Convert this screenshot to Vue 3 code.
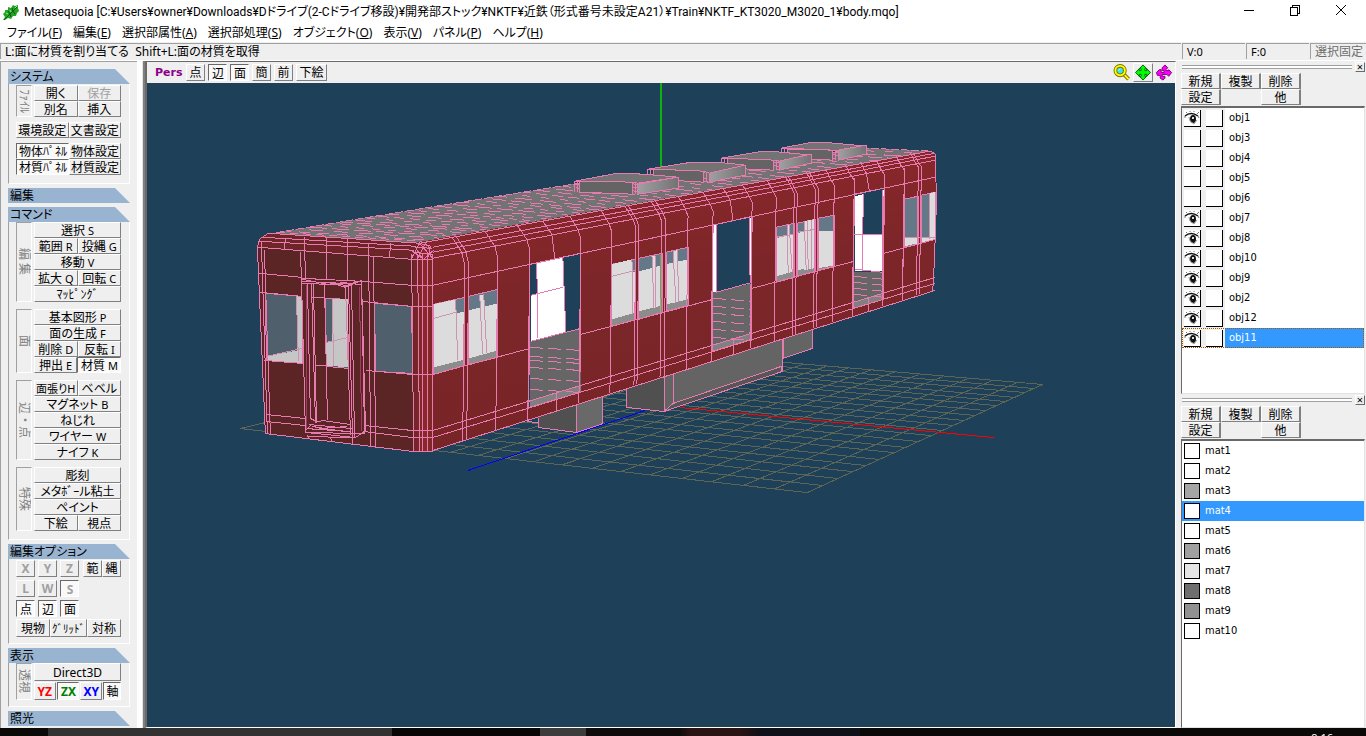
<template>
  <div class="app">
    <header class="titlebar">
      <svg class="leaf" viewBox="0 0 17 17">
        <path d="M1 16L3 13L1 10L3 8L3 6L6 6L6 3L9 4L11 1L13 2L16 1L16 4L17 7L15 9L14 12L11 12L9 15L6 14L3 16Z" fill="#22a522" />
        <path d="M2 16L15 3M6 7L8 10M10 4L11 7M9 13L8 10M13 10L11 7" stroke="#0a5a12" fill="none" />
        <path d="M4 9L6 10M8 6L9 8M13 4L15 2" stroke="#8cf08c" fill="none" />
      </svg>
      <h1>Metasequoia [C:¥Users¥owner¥Downloads¥Dドライブ(2-Cドライブ移設)¥開発部ストック¥NKTF¥近鉄（形式番号未設定A21）¥Train¥NKTF_KT3020_M3020_1¥body.mqo]</h1>
      <div class="window-buttons">
        <button aria-label="最小化"><svg viewBox="0 0 12 12"><path d="M1 6.5H11" /></svg></button>
        <button aria-label="元に戻す"><svg viewBox="0 0 12 12"><path d="M1.5 3.5H8.500V11.500H1.500ZM3.500 3V1.500H10.500V9.500H9" /></svg></button>
        <button aria-label="閉じる"><svg viewBox="0 0 12 12"><path class="smooth" d="M1 1L11 11M11 1L1 11" /></svg></button>
      </div>
    </header>

    <nav class="menubar">
      <button v-for="m in menus" :key="m.key">{{ m.label }}(<u>{{ m.key }}</u>)</button>
    </nav>

    <div class="statusbar">
      <span class="hint">L:面に材質を割り当てる&nbsp; Shift+L:面の材質を取得</span>
      <span class="cell">V:0</span>
      <span class="cell">F:0</span>
      <span class="cell lock">選択固定</span>
    </div>

    <main class="workspace">
      <aside class="sidebar">
        <section v-for="s in sections" :key="s.title" class="section">
          <h2>{{ s.title }}</h2>
          <div v-if="s.groups" class="section-body" :class="s.kind">
            <div v-for="(g, gi) in s.groups" :key="gi" class="group" :class="g.kind">
              <span v-if="g.tab" class="tab">{{ g.tab }}</span>
              <div class="rows">
                <div v-for="(row, ri) in g.rows" :key="ri" class="row">
                  <button
                    v-for="b in row"
                    :key="b.t + (b.k || '')"
                    class="btn"
                    :class="[b.c, { pressed: b.on }]"
                    :disabled="b.off"
                  >{{ b.t }}<span v-if="b.k" class="key">{{ b.k }}</span></button>
                </div>
              </div>
            </div>
          </div>
        </section>
      </aside>
      <div class="sidebar-edge"></div>

      <section class="view">
        <div class="view-toolbar">
          <strong>Pers</strong>
          <button v-for="b in viewButtons" :key="b.t" class="btn" :class="{ pressed: b.on, wide: b.t.length > 1 }">{{ b.t }}</button>
          <div class="nav-icons">
            <button aria-label="拡大">
              <svg viewBox="0 0 18 18">
                <path d="M10 10L16 16" stroke="#807000" stroke-width="4" />
                <path d="M10 10L16 16" stroke="#ffff00" stroke-width="2" />
                <circle cx="7" cy="7" r="5" fill="#30e8f8" stroke="#807000" stroke-width="4" />
                <circle cx="7" cy="7" r="5" fill="none" stroke="#ffff00" stroke-width="2" />
                <path d="M5 7L7 5" stroke="#fff" />
              </svg>
            </button>
            <button class="raised" aria-label="移動">
              <svg viewBox="0 0 18 18">
                <path d="M9 1L13 5H11V7H13V5L17 9L13 13V11H11V13H13L9 17L5 13H7V11H5V13L1 9L5 5V7H7V5H5Z" fill="#00ff00" stroke="#006000" />
              </svg>
            </button>
            <button aria-label="回転">
              <svg viewBox="0 0 18 18">
                <path d="M10 1L13 4L11 6V7H14V6L17 9L14 13L12 11H7V13L10 13V15L8 17L5 15V12L2 12L1 9L4 6H6V9H9V7H7V4Z" fill="#ff00ff" stroke="#700070" />
              </svg>
            </button>
          </div>
        </div>

        <svg class="scene" viewBox="147 83 1028 643" preserveAspectRatio="xMidYMid slice" shape-rendering="crispEdges">
          <defs>
            <linearGradient id="sideFill" x1="0" y1="0" x2="0.200" y2="1">
              <stop offset="0" stop-color="#8f272b" />
              <stop offset="0.500" stop-color="#7c2629" />
              <stop offset="1" stop-color="#782528" />
            </linearGradient>
            <linearGradient id="cornerFill">
              <stop offset="0" stop-color="#6a2527" />
              <stop offset="0.600" stop-color="#8a2729" />
              <stop offset="1" stop-color="#7c2629" />
            </linearGradient>
            <linearGradient id="boxFill">
              <stop offset="0" stop-color="#a0a0a0" />
              <stop offset="1" stop-color="#737373" />
            </linearGradient>
          </defs>

          <path :d="gridPath" class="grid" />
          <path d="M661 83V175" stroke="#0ab40a" />

          <!-- 床下機器 -->
          <g class="edge">
            <path d="M538 415L577 400V432L539 427Z" fill="#505050" />
            <path d="M577 400L603 391V423L577 432Z" fill="#696969" />
            <path d="M527 421L538 422" fill="none" />
            <path d="M783 336L812 326V348L783 358Z" fill="#646464" />
            <path d="M627 385L664 372V411L627 407Z" fill="#505050" />
            <path d="M664 373L782 334V371L664 411Z" fill="#646464" />
            <path d="M664 411L673 403L781 366L782 371Z" fill="#565656" />
            <path d="M673 370V403" fill="none" />
          </g>
          <path d="M645 410L468 470" stroke="#0000ff" />
          <path d="M680 407L993 437" stroke="#ff0000" />

          <!-- 屋根 -->
          <path d="M267 234L412 210L573 184L867 148L930 151L413 243Z" fill="#737373" />
          <path d="M267 234L412 210L573 184L867 148L930 151" class="line dash" />
          <path
            v-for="(r, i) in roofLines"
            :key="'r' + i"
            :d="r"
            class="line"
            :stroke-dasharray="(8 + (i % 4) * 3) + ' ' + (5 + (i % 3) * 3)"
            :stroke-dashoffset="i * 7"
          />

          <!-- クーラー -->
          <g v-for="(u, i) in coolers" :key="'c' + i">
            <path :d="u.top" fill="#737373" class="line-only" />
            <path :d="u.front" fill="#646464" class="line-only" />
            <path :d="u.side" fill="url(#boxFill)" class="line-only" />
            <path :d="u.fins" class="line" />
          </g>

          <!-- 側面 -->
          <path d="M413 243L930 151L936 158V202L932 291L432 450L414 451Z" fill="url(#sideFill)" />
          <path d="M412 246L420 243L434 248L433 450L414 451Z" fill="url(#cornerFill)" />

          <!-- 側面の窓 -->
          <g v-for="(w, i) in panes" :key="'w' + i">
            <path :d="w.outer" fill="#8c8c8c" />
            <path :d="w.slate" fill="#647887" />
            <path :d="w.white" fill="#dcdcdc" />
            <path :d="w.outer" class="line" />
          </g>
          <path d="M434 304L456 299V360L434 366ZM612 264L632 259V313L612 319ZM804 221L814 219V268L804 270ZM929 193L935 192V238L929 240ZM480 295L484 294V354L480 355ZM652 256L655 255V307L652 308ZM673 251L677 250V302L673 303ZM787 225L789 225V272L787 273Z" fill="#dcdcdc" />
          <path d="M434 318L456 312M456 299L458 360M480 295L483 354M484 294L487 353M612 276L636 270M632 259L633 314M652 256L654 308M655 255L656 308M673 251L676 303M677 250L679 302M787 225L788 273M789 225L792 272M804 221L806 270M807 221L808 269M811 220V269M776 237L794 234M797 232L815 229M929 193V239M904 237L935 237" class="inner" />
          <path d="M661 255V312" stroke="#4fb04f" />

          <!-- ドア開口 -->
          <g v-for="(d, i) in doors" :key="'d' + i">
            <path :d="d.outer" fill="#1e4159" />
            <path :d="d.floor" fill="#666" />
            <path :d="d.strip" fill="#808080" />
            <path :d="d.white" fill="#fff" />
            <path :d="d.dashes" class="line" stroke-dasharray="13 5" />
            <path :d="d.trim" class="line" />
            <path :d="d.outer" class="line" />
          </g>

          <path :d="sideLevels" class="line" />
          <path :d="sideVerticals" class="line" />
          <path :d="roofCurves" class="line" />
          <path d="M930 151L935 154L936 202L935 233L933 282L932 291M904 168V200L902 298M854 178V196" class="line" />

          <!-- 前面 -->
          <path d="M258 243L262 236L270 233L420 243L413 250L414 451L266 433Z" fill="#5c2525" />
          <path d="M259 241L263 236L270 233L420 243L413 258L259 247Z" fill="#6e2528" />
          <g class="edge">
            <path d="M266 293L302 296L303 363L267 360Z" fill="#4f606c" />
            <path d="M375 303L412 306L413 373L376 371Z" fill="#4f606c" />
            <path d="M326 298L348 299L349 368L327 366Z" fill="#4f606c" />
          </g>
          <path d="M297 296H302L303 363L268 360V356L298 350ZM333 299H348L349 367L327 365V342L333 340Z" fill="#c6c6c6" />
          <path d="M297 296L299 361M267 356L303 348M333 299L334 366M327 342L349 337" class="inner" />
          <path :d="frontLines" class="line" />

          <!-- 貫通扉 -->
          <path d="M302 278L362 281L365 433L306 432ZM303 281L362 284M302 283L351 285L362 280M308 283L311 418M312 283L316 422L323 420L351 424M314 284L317 421M325 284L328 419M349 284L353 437M352 285L355 436M362 281L366 430L356 437L307 432M346 286L351 434M313 297H326M316 365H327M306 428L351 431M310 424L352 428M313 426L345 431M308 436L353 437M311 418L317 421M307 429L312 424M320 428L347 426M303 279L328 284L347 282M336 284L346 287L356 281" class="line" />
          <path d="M307 285V428M360 287L362 430" stroke="#a13c62" />

          <!-- 角の丸み -->
          <path :d="cornerLines" class="line" />
        </svg>
      </section>

      <aside class="panels">
        <section class="panel objects">
          <div class="grip"><span></span><button aria-label="閉じる">×</button></div>
          <div class="panel-buttons">
            <button v-for="b in panelButtons" :key="b" class="btn" :class="{ last: b === '他' }">{{ b }}</button>
          </div>
          <ul class="list">
            <li v-for="o in objects" :key="o.name" :class="{ selected: o.name === 'obj11' }">
              <span class="checks">
                <button class="box" :aria-pressed="o.visible" :aria-label="o.name + ' 表示'">
                  <svg v-if="o.visible" viewBox="0 0 16 16">
                    <path d="M1 6Q7 1 14 6" stroke="#111" stroke-width="1.500" fill="none" />
                    <path d="M3 3L2 2M6 2V1M10 2V1M13 4L15 2M1 6V8M14 6L15 8" stroke="#777" fill="none" />
                    <ellipse cx="9" cy="9" rx="3" ry="4" fill="#111" />
                    <path d="M5 7L6 11L10 14L13 10" stroke="#999" fill="none" />
                    <path d="M8 7H10V9H8Z" fill="#ddd" />
                  </svg>
                </button>
                <button class="box" :aria-label="o.name + ' ロック'"></button>
              </span>
              <span class="name">{{ o.name }}</span>
            </li>
          </ul>
        </section>

        <section class="panel materials">
          <div class="grip"><span></span><button aria-label="閉じる">×</button></div>
          <div class="panel-buttons">
            <button v-for="b in panelButtons" :key="b" class="btn" :class="{ last: b === '他' }">{{ b }}</button>
          </div>
          <ul class="list">
            <li v-for="(m, i) in materials" :key="i" :class="{ selected: i === 3 }">
              <span class="swatch" :style="{ background: m }"></span>
              <span class="name">mat{{ i + 1 }}</span>
            </li>
          </ul>
        </section>
      </aside>
    </main>

    <footer class="taskbar"><span>9:16</span></footer>
  </div>
</template>

<script setup>
const menus = [
  { label: 'ファイル', key: 'F' },
  { label: '編集', key: 'E' },
  { label: '選択部属性', key: 'A' },
  { label: '選択部処理', key: 'S' },
  { label: 'オブジェクト', key: 'O' },
  { label: '表示', key: 'V' },
  { label: 'パネル', key: 'P' },
  { label: 'ヘルプ', key: 'H' }
]

const viewButtons = [
  { t: '点' }, { t: '辺', on: true }, { t: '面', on: true }, { t: '簡' }, { t: '前' }, { t: '下絵' }
]

const panelButtons = ['新規', '複製', '削除', '設定', '他']

const sections = [
  {
    title: 'システム',
    kind: 'system',
    groups: [
      { tab: 'ﾌｧｲﾙ', rows: [[{ t: '開く' }, { t: '保存', off: true }], [{ t: '別名' }, { t: '挿入' }]] },
      { rows: [[{ t: '環境設定' }, { t: '文書設定' }]] },
      { rows: [[{ t: '物体ﾊﾟﾈﾙ', on: true }, { t: '物体設定' }], [{ t: '材質ﾊﾟﾈﾙ', on: true }, { t: '材質設定' }]] }
    ]
  },
  { title: '編集' },
  {
    title: 'コマンド',
    kind: 'command',
    groups: [
      {
        tab: '編 集',
        rows: [
          [{ t: '選択', k: 'S' }],
          [{ t: '範囲', k: 'R' }, { t: '投縄', k: 'G' }],
          [{ t: '移動', k: 'V' }],
          [{ t: '拡大', k: 'Q' }, { t: '回転', k: 'C' }],
          [{ t: 'ﾏｯﾋﾟﾝｸﾞ' }]
        ]
      },
      {
        tab: '面',
        rows: [
          [{ t: '基本図形', k: 'P' }],
          [{ t: '面の生成', k: 'F' }],
          [{ t: '削除', k: 'D' }, { t: '反転', k: 'I' }],
          [{ t: '押出', k: 'E' }, { t: '材質', k: 'M', on: true }]
        ]
      },
      {
        tab: '辺・点',
        rows: [
          [{ t: '面張り', k: 'H', c: 'snug' }, { t: 'ベベル' }],
          [{ t: 'マグネット', k: 'B' }],
          [{ t: 'ねじれ' }],
          [{ t: 'ワイヤー', k: 'W' }],
          [{ t: 'ナイフ', k: 'K' }]
        ]
      },
      {
        tab: '特殊',
        rows: [[{ t: '彫刻' }], [{ t: 'メタﾎﾞｰル粘土' }], [{ t: 'ペイント' }], [{ t: '下絵' }, { t: '視点' }]]
      }
    ]
  },
  {
    title: '編集オプション',
    kind: 'options',
    groups: [
      {
        kind: 'square',
        rows: [
          [{ t: 'X', off: true }, { t: 'Y', off: true }, { t: 'Z', off: true }, { t: '範', c: 'pair' }, { t: '縄', c: 'pair-end' }],
          [{ t: 'L', off: true }, { t: 'W', off: true }, { t: 'S', off: true, on: true }],
          [{ t: '点', on: true }, { t: '辺', on: true }, { t: '面', on: true }]
        ]
      },
      { kind: 'tall', rows: [[{ t: '現物' }, { t: 'ｸﾞﾘｯﾄﾞ', c: 'roomy' }, { t: '対称' }]] }
    ]
  },
  {
    title: '表示',
    kind: 'display',
    groups: [
      {
        tab: '透視',
        kind: 'tall',
        rows: [
          [{ t: 'Direct3D' }],
          [{ t: 'YZ', c: 'yz' }, { t: 'ZX', c: 'zx', on: true }, { t: 'XY', c: 'xy' }, { t: '軸', c: 'axis', on: true }]
        ]
      }
    ]
  },
  { title: '照光' }
]

const hidden = ['obj3', 'obj4', 'obj5', 'obj6']
const objects = ['obj1', 'obj3', 'obj4', 'obj5', 'obj6', 'obj7', 'obj8', 'obj10', 'obj9', 'obj2', 'obj12', 'obj11']
  .map(name => ({ name, visible: !hidden.includes(name) }))

const materials = ['#fff', '#fff', '#a5a5a5', '#fff', '#fff', '#a0a0a0', '#e6e6e6', '#6e6e6e', '#919191', '#fff']

// 側面の水平線 [左端y, 右端y]
const X1 = 433
const X2 = 935
const levels = {
  roof2: [247, 153],
  roof3: [252, 156],
  roof4: [258, 160],
  doorTop: [285, 177],
  winTop: [304, 192],
  winBottom: [374, 239],
  sill: [430, 277],
  sill2: [437, 283],
  bottom: [450, 290]
}
const yAt = (name, x) => {
  const [a, b] = levels[name]
  return Math.round(a + (b - a) * (x - X1) / (X2 - X1))
}
const poly = pts => 'M' + pts.map(p => p.join(' ')).join('L') + 'Z'
const seg = (x1, y1, x2, y2) => `M${x1} ${y1}L${x2} ${y2}`

const openings = [[530, 581], [713, 752], [854, 884]]
const inDoor = x => openings.some(([a, b]) => x > a && x < b)

// 開口部を避けて水平線を引く
const spans = [[433, 530], [581, 713], [752, 854], [884, 935]]
const sideLevels = Object.keys(levels).map(name => {
  if (name === 'winTop') return ''
  if (name === 'winBottom') {
    return spans.map(([a, b]) => seg(a, yAt(name, a), b, yAt(name, b))).join('')
  }
  return seg(X1, levels[name][0], X2, levels[name][1])
}).join('') + seg(420, 243, 930, 151)

const verticals = [465, 469, 498, 530, 581, 612, 636, 639, 662, 666, 688, 713, 752, 776, 794, 797, 815, 818, 834, 854, 884, 904, 918, 921]
const sideVerticals = verticals
  .map(x => seg(x, yAt('doorTop', x) - 14, x - 2, yAt('bottom', x)))
  .join('') + [557, 733, 868].map(x => seg(x, yAt('sill2', x) - 6, x, yAt('bottom', x))).join('')

const roofCurves = [...verticals, 555, 733, 869].map(x => {
  const y = yAt('doorTop', x)
  const h = y - yAt('roof2', x)
  const dx = Math.round(h / 3)
  const low = inDoor(x) ? y : y - 14
  return `M${x} ${low}L${x - 3} ${y - Math.round(h * 0.7)}L${x - dx} ${y - h - 3}`
}).join('')

// 窓: x範囲, 白い面の上端と下端
const panes = [
  [434, 465, 319, 311, 367, 359],
  [469, 498, 310, 303, 358, 350],
  [612, 636, 277, 271, 319, 312],
  [639, 662, 271, 265, 311, 305],
  [666, 688, 264, 259, 304, 299],
  [776, 794, 238, 234, 276, 271],
  [797, 815, 233, 229, 270, 266],
  [818, 834, 231, 231, 268, 265],
  [904, 918, 237, 237, 246, 243],
  [921, 935, 237, 237, 242, 239]
].map(([a, b, ta, tb, ba, bb]) => ({
  outer: poly([[a, yAt('winTop', a)], [b, yAt('winTop', b)], [b, yAt('winBottom', b)], [a, yAt('winBottom', a)]]),
  slate: poly([[a, yAt('winTop', a)], [b, yAt('winTop', b)], [b, tb], [a, ta]]),
  white: poly([[a, ta], [b, tb], [b, bb], [a, ba]])
}))

const doorParts = [
  {
    floor: [341, 328],
    white: 'M537 263L563 257L566 332L531 341V295L537 294Z',
    trim: 'M537 263L538 338M563 257L566 332M531 295L563 287M531 341L581 328',
    rows: [348, 357, 361, 368, 379, 390]
  },
  {
    floor: [292, 283],
    white: 'M713 225H716V292H713ZM749 218H752V283H750Z',
    trim: 'M716 225V292L752 282M749 218L750 282',
    rows: [299, 307, 314, 322, 330, 338]
  },
  {
    floor: [272, 272],
    white: 'M855 196L863 194V234L882 235V271H855ZM882 190H884V269H882Z',
    trim: 'M863 194L862 270M854 234H882M882 190V271M855 269L882 272',
    rows: [277, 283, 289, 295]
  }
]
const doors = openings.map(([a, b], i) => {
  const p = doorParts[i]
  return {
    outer: poly([[a, yAt('doorTop', a)], [b, yAt('doorTop', b)], [b - 1, yAt('sill2', b)], [a - 1, yAt('sill2', a)]]),
    floor: poly([[a, p.floor[0]], [b, p.floor[1]], [b, yAt('sill2', b)], [a, yAt('sill2', a)]]),
    strip: poly([[a, yAt('sill', a)], [b, yAt('sill', b)], [b, yAt('sill2', b)], [a, yAt('sill2', a)]]),
    white: p.white,
    trim: p.trim,
    dashes: p.rows.map(y => seg(a, y - 1, b, y + 2)).join('')
  }
})

// 屋根の横線（奥ほど間隔が狭い）
const roofLines = []
const rows = 46
for (let i = 1; i < rows; i++) {
  const t = i / rows
  const k = t * 1.3 / (1.3 + 0.3 * (1 - t))
  const lx = 267 + 600 * k
  const ly = k < 0.51 ? 234 - 50 * k / 0.51 : 184 - 36 * (k - 0.51) / 0.49
  const rx = 413 + 517 * k
  const ry = 243 - 92 * k
  roofLines.push(seg(Math.round(lx), Math.round(ly), Math.round(rx), Math.round(ry)))
}

const coolers = [
  {
    top: 'M781 148L813 142L833 143L866 146L838 150L832 150Z',
    front: 'M787 149L832 150V160L787 158Z',
    side: 'M838 150L866 145V154L838 160Z',
    fins: 'M781 148V152M784 148V152M787 148V152M832 150V160M835 150V160'
  },
  {
    top: 'M721 158L763 151L780 152L811 155L779 161L773 160Z',
    front: 'M727 158L773 160V170L727 168Z',
    side: 'M779 161L811 154V163L779 170Z',
    fins: 'M721 158V164M724 158V164M727 158V164M773 160V170M776 160V170'
  },
  {
    top: 'M648 169L692 162L717 162L745 165L709 173L703 171Z',
    front: 'M654 169L703 171V182L654 179Z',
    side: 'M709 173L745 165V175L709 182Z',
    fins: 'M648 169V174M651 169V175M703 171V182M706 172V182'
  },
  {
    top: 'M575 181L618 173L643 174L678 177L638 183L633 182Z',
    front: 'M580 181L633 182V194L580 192Z',
    side: 'M638 184L678 177V188L638 194Z',
    fins: 'M575 181V192M578 181V192M633 182V194M636 182V194'
  }
]

const frontRows = [
  [259, 247, 412, 259], [260, 241, 414, 250], [263, 237, 416, 246], [269, 233, 420, 243],
  [260, 273, 302, 277], [362, 281, 412, 285],
  [261, 292, 302, 296], [362, 301, 412, 306],
  [265, 360, 303, 363], [366, 370, 413, 374],
  [267, 414, 306, 418], [365, 425, 413, 430],
  [267, 421, 306, 425], [365, 431, 413, 437],
  [266, 433, 414, 451]
]
const frontCols = [
  [258, 247, 266, 433], [262, 241, 268, 433], [265, 250, 271, 434],
  [301, 252, 302, 278], [305, 237, 306, 278], [327, 238, 327, 280], [348, 239, 348, 281],
  [369, 243, 371, 446], [374, 257, 376, 447],
  [308, 434, 310, 438], [331, 436, 332, 441], [353, 436, 353, 443],
  [286, 238, 285, 249], [391, 243, 390, 257],
  [258, 247, 260, 239], [260, 239, 269, 233]
]
const frontLines = [...frontRows, ...frontCols].map(l => seg(...l)).join('')

const cornerLines = [412, 418, 423, 428, 433].map(x => seg(x, 254, x + (x < 420 ? 2 : 0), 451)).join('') +
  'M412 258L420 243L433 258M418 258L426 243L430 248M412 250L424 259L434 250M423 259L416 247M428 258L431 246L420 243M412 259H433M413 252L433 254M415 247L432 248M412 285H433M412 306H433M413 374H433M413 430H433M413 437H433M414 451H433'

// 地面グリッドの四隅から射影変換を求める
const corners = [[241, 428], [586, 345], [1042, 384], [807, 492]]
const project = (u, v) => {
  const [[x0, y0], [x1, y1], [x2, y2], [x3, y3]] = corners
  const dx1 = x1 - x2, dx2 = x3 - x2, sx = x0 - x1 + x2 - x3
  const dy1 = y1 - y2, dy2 = y3 - y2, sy = y0 - y1 + y2 - y3
  const det = dx1 * dy2 - dx2 * dy1
  const g = (sx * dy2 - dx2 * sy) / det
  const h = (dx1 * sy - sx * dy1) / det
  const w = g * u + h * v + 1
  return [
    Math.round(((x1 - x0 + g * x1) * u + (x3 - x0 + h * x3) * v + x0) / w),
    Math.round(((y1 - y0 + g * y1) * u + (y3 - y0 + h * y3) * v + y0) / w)
  ]
}
let gridPath = ''
for (let i = 0; i <= 20; i++) {
  const t = i / 20
  gridPath += seg(...project(t, 0), ...project(t, 1)) + seg(...project(0, t), ...project(1, t))
}
</script>

<style>
body {
  margin: 0;
  overflow: hidden;
}
</style>

<style scoped>
.app {
  display: flex;
  flex-direction: column;
  height: 100vh;
  background: #efefef;
  color: #000;
  font: 12px/16px "Noto Sans", "Noto Sans CJK JP", sans-serif;
}
button {
  font: inherit;
  color: inherit;
  border: none;
  padding: 0;
  margin: 0;
  background: none;
}
h1, h2, ul {
  margin: 0;
  padding: 0;
  font-size: 12px;
  font-weight: normal;
  list-style: none;
}

/* タイトルバー */
.titlebar {
  display: flex;
  align-items: center;
  flex: none;
  height: 24px;
  background: #fff;
}
.leaf {
  width: 17px;
  height: 17px;
  margin: 0 5px 0 2px;
}
.titlebar h1 {
  flex: 1;
  font-family: Roboto, "Noto Sans CJK JP", sans-serif;
  white-space: nowrap;
  font-feature-settings: "palt";
}
.window-buttons {
  display: flex;
  padding-right: 2px;
}
.window-buttons button {
  width: 46px;
  height: 20px;
}
.window-buttons svg {
  width: 12px;
  height: 12px;
  fill: none;
  stroke: #000;
  shape-rendering: crispEdges;
}
.window-buttons .smooth {
  shape-rendering: auto;
}
.menubar {
  display: flex;
  flex: none;
  gap: 11px;
  height: 18px;
  padding: 0 7px;
  background: #fff;
  font-feature-settings: "palt";
}
.menubar button {
  line-height: 18px;
}

/* ステータスバー */
.statusbar {
  display: flex;
  flex: none;
  gap: 1px;
  height: 16px;
  padding: 1px 0;
  border-bottom: 1px solid #fff;
  font-size: 12px;
}
.statusbar span {
  box-sizing: border-box;
  border-top: 1px solid #a0a0a0;
  border-left: 1px solid #a0a0a0;
  padding-left: 4px;
  line-height: 16px;
  white-space: nowrap;
  font-feature-settings: "palt";
}
.statusbar .hint {
  flex: 1;
}
.statusbar .cell {
  width: 63px;
  font-size: 11px;
}
.statusbar .lock {
  width: 56px;
  font-size: 12px;
  color: #6d6d6d;
}

.workspace {
  display: flex;
  flex: 1;
  min-height: 0;
}

/* 左パネル */
.sidebar {
  box-sizing: border-box;
  flex: none;
  width: 137px;
  padding: 7px 7px 0;
  border-left: 1px solid #a0a0a0;
  border-top: 1px solid #a0a0a0;
  overflow: hidden;
}
.sidebar-edge {
  box-sizing: border-box;
  flex: none;
  width: 8px;
  border-left: 1px solid #fff;
  border-right: 2px solid #808080;
  background: linear-gradient(90deg, #fff 4px, #e3e3e3 4px);
}
.section {
  margin-bottom: 4px;
}
.section h2 {
  height: 15px;
  padding-left: 2px;
  line-height: 15px;
  background: #99b4d1;
  clip-path: polygon(0 0, 107px 0, 100% 100%, 0 100%);
  white-space: nowrap;
  font-feature-settings: "palt";
}
.section-body {
  box-sizing: border-box;
  display: flex;
  flex-direction: column;
  gap: 7px;
  padding: 0 8px 8px 7px;
  border: 1px solid #fff;
  border-top: none;
  border-left-color: #a0a0a0;
}
.system {
  gap: 5px;
  padding-top: 1px;
}
.group {
  display: flex;
  gap: 2px;
}
.tab {
  box-sizing: border-box;
  flex: none;
  width: 16px;
  border: 1px solid #fff;
  border-top-color: #a0a0a0;
  border-left-color: #a0a0a0;
  color: #808080;
  line-height: 14px;
  text-align: center;
  white-space: nowrap;
  overflow: hidden;
  writing-mode: vertical-rl;
  text-orientation: sideways;
}
.rows {
  flex: 1;
  min-width: 0;
}
.row {
  display: flex;
}
.row .btn {
  flex: 1 1 0;
  min-width: 0;
}
.btn {
  box-sizing: border-box;
  height: 16px;
  border: 1px solid #fff;
  border-right-color: #808080;
  border-bottom-color: #808080;
  background: #efefef;
  line-height: 13px;
  text-align: center;
  white-space: nowrap;
  overflow: hidden;
  font-feature-settings: "palt";
}
.btn:disabled {
  color: #a0a0a0;
}
.btn.pressed {
  border-color: #696969 #fff #fff #696969;
  background: #f9f9f9;
  padding: 1px 0 0 1px;
}
.key {
  margin-left: 3px;
  font-size: 11px;
}
.snug .key {
  margin-left: 0;
}
.row .snug {
  font-size: 11px;
}
.options {
  gap: 2px;
  padding-top: 1px;
  padding-bottom: 6px;
}
.square .rows {
  display: flex;
  flex-direction: column;
  gap: 3px;
}
.square .row {
  gap: 3px;
}
.square .btn {
  flex: none;
  width: 19px;
  height: 17px;
}
.square .btn:disabled {
  font-weight: bold;
}
.square .pair {
  margin-left: 1px;
}
.square .pair-end {
  margin-left: -3px;
}
.tall .btn {
  height: 18px;
  line-height: 15px;
}
.tall .roomy {
  flex: none;
  width: 37px;
  font-size: 11px;
}
.display {
  padding-bottom: 6px;
}
.display .rows {
  display: flex;
  flex-direction: column;
  gap: 1px;
}
.display .row {
  gap: 1px;
}
.display .axis {
  flex: none;
  width: 18px;
}
.yz, .zx, .xy {
  font-weight: bold;
}
.yz { color: #f00; }
.zx { color: #008000; }
.xy { color: #00f; }

/* 3Dビュー */
.view {
  display: flex;
  flex: 1;
  flex-direction: column;
  min-width: 0;
  border-top: 1px solid #696969;
  border-left: 2px solid #696969;
  border-right: 1px solid #fff;
  border-bottom: 1px solid #fff;
}
.view-toolbar {
  display: flex;
  flex: none;
  align-items: center;
  gap: 3px;
  height: 21px;
  padding: 0 1px 0 8px;
}
.view-toolbar strong {
  width: 28px;
  color: #8b008b;
  font: bold 11px/16px "DejaVu Sans", sans-serif;
}
.view-toolbar .btn {
  width: 19px;
  height: 17px;
}
.view-toolbar .wide {
  width: 31px;
}
.nav-icons {
  display: flex;
  gap: 1px;
  margin-left: auto;
}
.nav-icons button {
  box-sizing: border-box;
  width: 20px;
  height: 19px;
  border: 1px solid transparent;
}
.nav-icons .raised {
  border-color: #fff #808080 #808080 #fff;
}
.nav-icons svg {
  display: block;
  width: 18px;
  height: 17px;
}
.scene {
  flex: 1;
  min-height: 0;
  width: 100%;
  background: #1e4159;
}
.grid {
  fill: none;
  stroke: #5d6656;
}
.line {
  fill: none;
  stroke: #e77bb0;
}
.line-only, .edge path {
  stroke: #e77bb0;
}
.dash {
  stroke-dasharray: 8 2;
}
.inner {
  fill: none;
  stroke: #cf93b2;
}

/* 右パネル */
.panels {
  display: flex;
  flex: none;
  flex-direction: column;
  width: 185px;
  margin-left: 5px;
}
.panel {
  display: flex;
  flex-direction: column;
}
.objects {
  flex: 0 0 333px;
}
.materials {
  flex: 1;
  min-height: 0;
}
.grip {
  display: flex;
  align-items: center;
  gap: 3px;
  height: 12px;
  padding: 0 1px;
}
.grip span {
  flex: 1;
  height: 2px;
  border-top: 1px solid #a0a0a0;
  border-bottom: 1px solid #a0a0a0;
  background: #fff;
}
.grip button {
  box-sizing: border-box;
  width: 10px;
  height: 10px;
  border: 1px solid #fff;
  border-right-color: #696969;
  border-bottom-color: #696969;
  font-size: 11px;
  line-height: 8px;
}
.panel-buttons {
  display: grid;
  grid-template-columns: repeat(3, 40px);
  padding-bottom: 1px;
}
.panel-buttons .btn {
  border-right-width: 2px;
}
.panel-buttons .last {
  grid-column: 3;
}
.list {
  flex: 1;
  min-height: 0;
  margin-right: 1px;
  border: 1px solid #e3e3e3;
  border-top: 2px solid #696969;
  border-left: 1px solid #696969;
  background: #fff;
  font: 11px/20px "DejaVu Sans Condensed", "Noto Sans", sans-serif;
}
.list li {
  display: flex;
  align-items: center;
  height: 20px;
}
.list .name {
  flex: 1;
  padding-left: 4px;
}
.checks {
  display: flex;
  align-items: center;
  gap: 5px;
  width: 41px;
  height: 20px;
  padding-left: 2px;
  background: #efefef;
}
.box {
  box-sizing: border-box;
  width: 17px;
  height: 17px;
  border-right: 1px solid #000;
  border-bottom: 1px solid #000;
  background: #fff;
}
.box svg {
  display: block;
  width: 16px;
  height: 16px;
}
.objects .selected {
  outline: 1px dotted #a05a00;
  outline-offset: -1px;
}
.selected .name {
  color: #fff;
  background: #3399ff;
}
.materials .selected {
  background: #3399ff;
}
.swatch {
  box-sizing: border-box;
  width: 16px;
  height: 16px;
  margin: 0 1px 0 2px;
  border: 1px solid #000;
}

.taskbar {
  display: flex;
  flex: none;
  justify-content: flex-end;
  height: 8px;
  padding-right: 33px;
  overflow: hidden;
  background: linear-gradient(90deg, #0b0908 48px, #323232 48px 392px, #080706 392px 540px, #3c3c3c 540px 586px, #100b0b 586px 680px, #2b1313 690px 740px, #101018 760px 860px, #0b0808 860px);
  color: #fff;
}
.taskbar span {
  padding-top: 2px;
  font-size: 11px;
  line-height: 16px;
}
</style>
